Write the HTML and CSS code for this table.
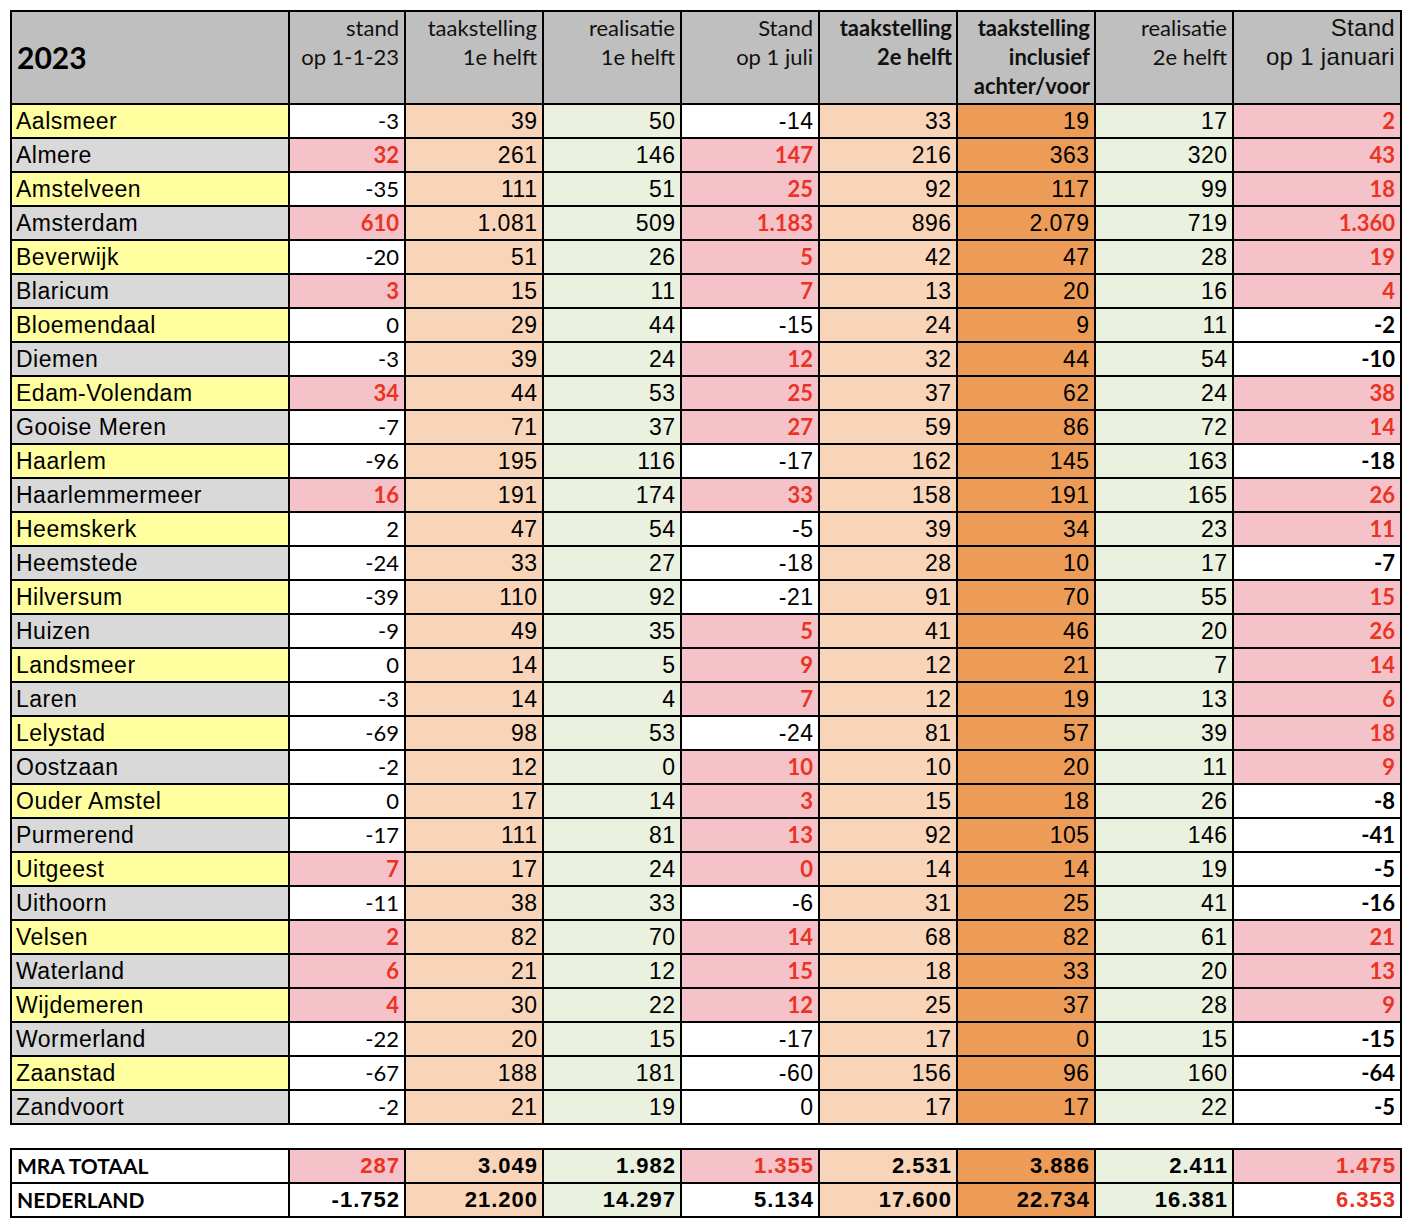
FILE: index.html
```html
<!DOCTYPE html>
<html lang="nl">
<head>
<meta charset="utf-8">
<title>2023</title>
<link rel="stylesheet" href="styles.css">
</head>
<body>
<div class="page">
  <div class="sheet main">
    <div class="hd hd-year">2023</div>
    <div class="hd">stand<br>op 1-1-23</div>
    <div class="hd">taakstelling<br>1e helft</div>
    <div class="hd">realisatie<br>1e helft</div>
    <div class="hd">Stand<br>op 1 juli</div>
    <div class="hd hd-b">taakstelling<br>2e helft</div>
    <div class="hd hd-b">taakstelling<br>inclusief<br>achter/voor</div>
    <div class="hd">realisatie<br>2e helft</div>
    <div class="hd hd-ar">Stand<br>op 1 januari</div>

    <div class="nm y">Aalsmeer</div><div class="w cl">-3</div><div class="pe ar">39</div><div class="gr ar">50</div><div class="w ar">-14</div><div class="pe ar">33</div><div class="or ar">19</div><div class="gr ar">17</div><div class="pk rb">2</div>
    <div class="nm g">Almere</div><div class="pk rb">32</div><div class="pe ar">261</div><div class="gr ar">146</div><div class="pk rb">147</div><div class="pe ar">216</div><div class="or ar">363</div><div class="gr ar">320</div><div class="pk rb">43</div>
    <div class="nm y">Amstelveen</div><div class="w cl">-35</div><div class="pe ar">111</div><div class="gr ar">51</div><div class="pk rb">25</div><div class="pe ar">92</div><div class="or ar">117</div><div class="gr ar">99</div><div class="pk rb">18</div>
    <div class="nm g">Amsterdam</div><div class="pk rb">610</div><div class="pe ar">1.081</div><div class="gr ar">509</div><div class="pk rb">1.183</div><div class="pe ar">896</div><div class="or ar">2.079</div><div class="gr ar">719</div><div class="pk rb">1.360</div>
    <div class="nm y">Beverwijk</div><div class="w cl">-20</div><div class="pe ar">51</div><div class="gr ar">26</div><div class="pk rb">5</div><div class="pe ar">42</div><div class="or ar">47</div><div class="gr ar">28</div><div class="pk rb">19</div>
    <div class="nm g">Blaricum</div><div class="pk rb">3</div><div class="pe ar">15</div><div class="gr ar">11</div><div class="pk rb">7</div><div class="pe ar">13</div><div class="or ar">20</div><div class="gr ar">16</div><div class="pk rb">4</div>
    <div class="nm y">Bloemendaal</div><div class="w cl">0</div><div class="pe ar">29</div><div class="gr ar">44</div><div class="w ar">-15</div><div class="pe ar">24</div><div class="or ar">9</div><div class="gr ar">11</div><div class="w kb">-2</div>
    <div class="nm g">Diemen</div><div class="w cl">-3</div><div class="pe ar">39</div><div class="gr ar">24</div><div class="pk rb">12</div><div class="pe ar">32</div><div class="or ar">44</div><div class="gr ar">54</div><div class="w kb">-10</div>
    <div class="nm y">Edam-Volendam</div><div class="pk rb">34</div><div class="pe ar">44</div><div class="gr ar">53</div><div class="pk rb">25</div><div class="pe ar">37</div><div class="or ar">62</div><div class="gr ar">24</div><div class="pk rb">38</div>
    <div class="nm g">Gooise Meren</div><div class="w cl">-7</div><div class="pe ar">71</div><div class="gr ar">37</div><div class="pk rb">27</div><div class="pe ar">59</div><div class="or ar">86</div><div class="gr ar">72</div><div class="pk rb">14</div>
    <div class="nm y">Haarlem</div><div class="w cl">-96</div><div class="pe ar">195</div><div class="gr ar">116</div><div class="w ar">-17</div><div class="pe ar">162</div><div class="or ar">145</div><div class="gr ar">163</div><div class="w kb">-18</div>
    <div class="nm g">Haarlemmermeer</div><div class="pk rb">16</div><div class="pe ar">191</div><div class="gr ar">174</div><div class="pk rb">33</div><div class="pe ar">158</div><div class="or ar">191</div><div class="gr ar">165</div><div class="pk rb">26</div>
    <div class="nm y">Heemskerk</div><div class="w cl">2</div><div class="pe ar">47</div><div class="gr ar">54</div><div class="w ar">-5</div><div class="pe ar">39</div><div class="or ar">34</div><div class="gr ar">23</div><div class="pk rb">11</div>
    <div class="nm g">Heemstede</div><div class="w cl">-24</div><div class="pe ar">33</div><div class="gr ar">27</div><div class="w ar">-18</div><div class="pe ar">28</div><div class="or ar">10</div><div class="gr ar">17</div><div class="w kb">-7</div>
    <div class="nm y">Hilversum</div><div class="w cl">-39</div><div class="pe ar">110</div><div class="gr ar">92</div><div class="w ar">-21</div><div class="pe ar">91</div><div class="or ar">70</div><div class="gr ar">55</div><div class="pk rb">15</div>
    <div class="nm g">Huizen</div><div class="w cl">-9</div><div class="pe ar">49</div><div class="gr ar">35</div><div class="pk rb">5</div><div class="pe ar">41</div><div class="or ar">46</div><div class="gr ar">20</div><div class="pk rb">26</div>
    <div class="nm y">Landsmeer</div><div class="w cl">0</div><div class="pe ar">14</div><div class="gr ar">5</div><div class="pk rb">9</div><div class="pe ar">12</div><div class="or ar">21</div><div class="gr ar">7</div><div class="pk rb">14</div>
    <div class="nm g">Laren</div><div class="w cl">-3</div><div class="pe ar">14</div><div class="gr ar">4</div><div class="pk rb">7</div><div class="pe ar">12</div><div class="or ar">19</div><div class="gr ar">13</div><div class="pk rb">6</div>
    <div class="nm y">Lelystad</div><div class="w cl">-69</div><div class="pe ar">98</div><div class="gr ar">53</div><div class="w ar">-24</div><div class="pe ar">81</div><div class="or ar">57</div><div class="gr ar">39</div><div class="pk rb">18</div>
    <div class="nm g">Oostzaan</div><div class="w cl">-2</div><div class="pe ar">12</div><div class="gr ar">0</div><div class="pk rb">10</div><div class="pe ar">10</div><div class="or ar">20</div><div class="gr ar">11</div><div class="pk rb">9</div>
    <div class="nm y">Ouder Amstel</div><div class="w cl">0</div><div class="pe ar">17</div><div class="gr ar">14</div><div class="pk rb">3</div><div class="pe ar">15</div><div class="or ar">18</div><div class="gr ar">26</div><div class="w kb">-8</div>
    <div class="nm g">Purmerend</div><div class="w cl">-17</div><div class="pe ar">111</div><div class="gr ar">81</div><div class="pk rb">13</div><div class="pe ar">92</div><div class="or ar">105</div><div class="gr ar">146</div><div class="w kb">-41</div>
    <div class="nm y">Uitgeest</div><div class="pk rb">7</div><div class="pe ar">17</div><div class="gr ar">24</div><div class="pk rb">0</div><div class="pe ar">14</div><div class="or ar">14</div><div class="gr ar">19</div><div class="w kb">-5</div>
    <div class="nm g">Uithoorn</div><div class="w cl">-11</div><div class="pe ar">38</div><div class="gr ar">33</div><div class="w ar">-6</div><div class="pe ar">31</div><div class="or ar">25</div><div class="gr ar">41</div><div class="w kb">-16</div>
    <div class="nm y">Velsen</div><div class="pk rb">2</div><div class="pe ar">82</div><div class="gr ar">70</div><div class="pk rb">14</div><div class="pe ar">68</div><div class="or ar">82</div><div class="gr ar">61</div><div class="pk rb">21</div>
    <div class="nm g">Waterland</div><div class="pk rb">6</div><div class="pe ar">21</div><div class="gr ar">12</div><div class="pk rb">15</div><div class="pe ar">18</div><div class="or ar">33</div><div class="gr ar">20</div><div class="pk rb">13</div>
    <div class="nm y">Wijdemeren</div><div class="pk rb">4</div><div class="pe ar">30</div><div class="gr ar">22</div><div class="pk rb">12</div><div class="pe ar">25</div><div class="or ar">37</div><div class="gr ar">28</div><div class="pk rb">9</div>
    <div class="nm g">Wormerland</div><div class="w cl">-22</div><div class="pe ar">20</div><div class="gr ar">15</div><div class="w ar">-17</div><div class="pe ar">17</div><div class="or ar">0</div><div class="gr ar">15</div><div class="w kb">-15</div>
    <div class="nm y">Zaanstad</div><div class="w cl">-67</div><div class="pe ar">188</div><div class="gr ar">181</div><div class="w ar">-60</div><div class="pe ar">156</div><div class="or ar">96</div><div class="gr ar">160</div><div class="w kb">-64</div>
    <div class="nm g">Zandvoort</div><div class="w cl">-2</div><div class="pe ar">21</div><div class="gr ar">19</div><div class="w ar">0</div><div class="pe ar">17</div><div class="or ar">17</div><div class="gr ar">22</div><div class="w kb">-5</div>
  </div>

  <div class="sheet totals">
    <div class="tn">MRA TOTAAL</div><div class="pk tb red">287</div><div class="pe tb">3.049</div><div class="gr tb">1.982</div><div class="pk tb red">1.355</div><div class="pe tb">2.531</div><div class="or tb">3.886</div><div class="gr tb">2.411</div><div class="pk tb red">1.475</div>
    <div class="tn">NEDERLAND</div><div class="w tb">-1.752</div><div class="pe tb">21.200</div><div class="gr tb">14.297</div><div class="w tb">5.134</div><div class="pe tb">17.600</div><div class="or tb">22.734</div><div class="gr tb">16.381</div><div class="w tb red">6.353</div>
  </div>
</div>
</body>
</html>
```

FILE: styles.css
```css
html, body {
  margin: 0;
  padding: 0;
  background: #ffffff;
}

.page {
  padding: 10px 0 0 10px;
}

.sheet {
  display: grid;
  grid-template-columns: 276px 114px repeat(6, 136px) 166px;
  grid-auto-rows: 32px;
  gap: 2px;
  padding: 2px;
  background: #000000;
  width: max-content;
}

.main {
  grid-template-rows: 91px;
}

.sheet > div {
  white-space: nowrap;
  overflow: hidden;
  line-height: 32px;
  text-align: right;
  color: #000000;
}

.totals {
  margin-top: 23px;
}

/* header */
.sheet > .hd {
  background: #bfbfbf;
  font-family: Lato, "Liberation Sans", sans-serif;
  font-size: 22px;
  line-height: 29px;
  padding: 1px 5px 0 0;
  box-sizing: border-box;
  color: #111111;
}
.sheet > .hd-b {
  font-weight: 700;
  padding-right: 4px;
}
.sheet > .hd-ar {
  font-family: "Liberation Sans", Arial, sans-serif;
  font-size: 24px;
  letter-spacing: 0.3px;
  padding-right: 5px;
}
.sheet > .hd-year {
  text-align: left;
  font-weight: 700;
  font-size: 30px;
  line-height: 91px;
  padding: 0 0 0 5px;
  color: #000000;
}

/* name column */
.sheet > .nm {
  text-align: left;
  padding-left: 4px;
  font-family: "Liberation Sans", Arial, sans-serif;
  font-size: 23px;
  letter-spacing: 0.5px;
}
.y { background: #ffff9f; }
.g { background: #d9d9d9; }

/* cell fills */
.w  { background: #ffffff; }
.pk { background: #f4c2c8; }
.pe { background: #f8d5b8; }
.gr { background: #ebf1df; }
.or { background: #ec9c56; }

/* text styles */
.sheet > .cl {
  font-family: Lato, "Liberation Sans", sans-serif;
  font-size: 22px;
  padding-right: 5px;
}
.sheet > .ar {
  font-family: "Liberation Sans", Arial, sans-serif;
  font-size: 23px;
  letter-spacing: 0.5px;
  padding-right: 4.5px;
}
.sheet > .rb {
  font-family: Lato, "Liberation Sans", sans-serif;
  font-size: 22px;
  font-weight: 700;
  color: #ea3323;
  padding-right: 5px;
}
.sheet > .kb {
  font-family: Lato, "Liberation Sans", sans-serif;
  font-size: 22px;
  font-weight: 700;
  padding-right: 5px;
}

/* totals */
.sheet > .tn {
  background: #ffffff;
  text-align: left;
  padding-left: 5px;
  font-family: Lato, "Liberation Sans", sans-serif;
  font-size: 21px;
  font-weight: 700;
}
.sheet > .tb {
  font-family: "Liberation Sans", Arial, sans-serif;
  font-size: 22px;
  font-weight: 700;
  letter-spacing: 1px;
  padding-right: 4px;
}
.sheet > .red {
  color: #ea3323;
}
```
